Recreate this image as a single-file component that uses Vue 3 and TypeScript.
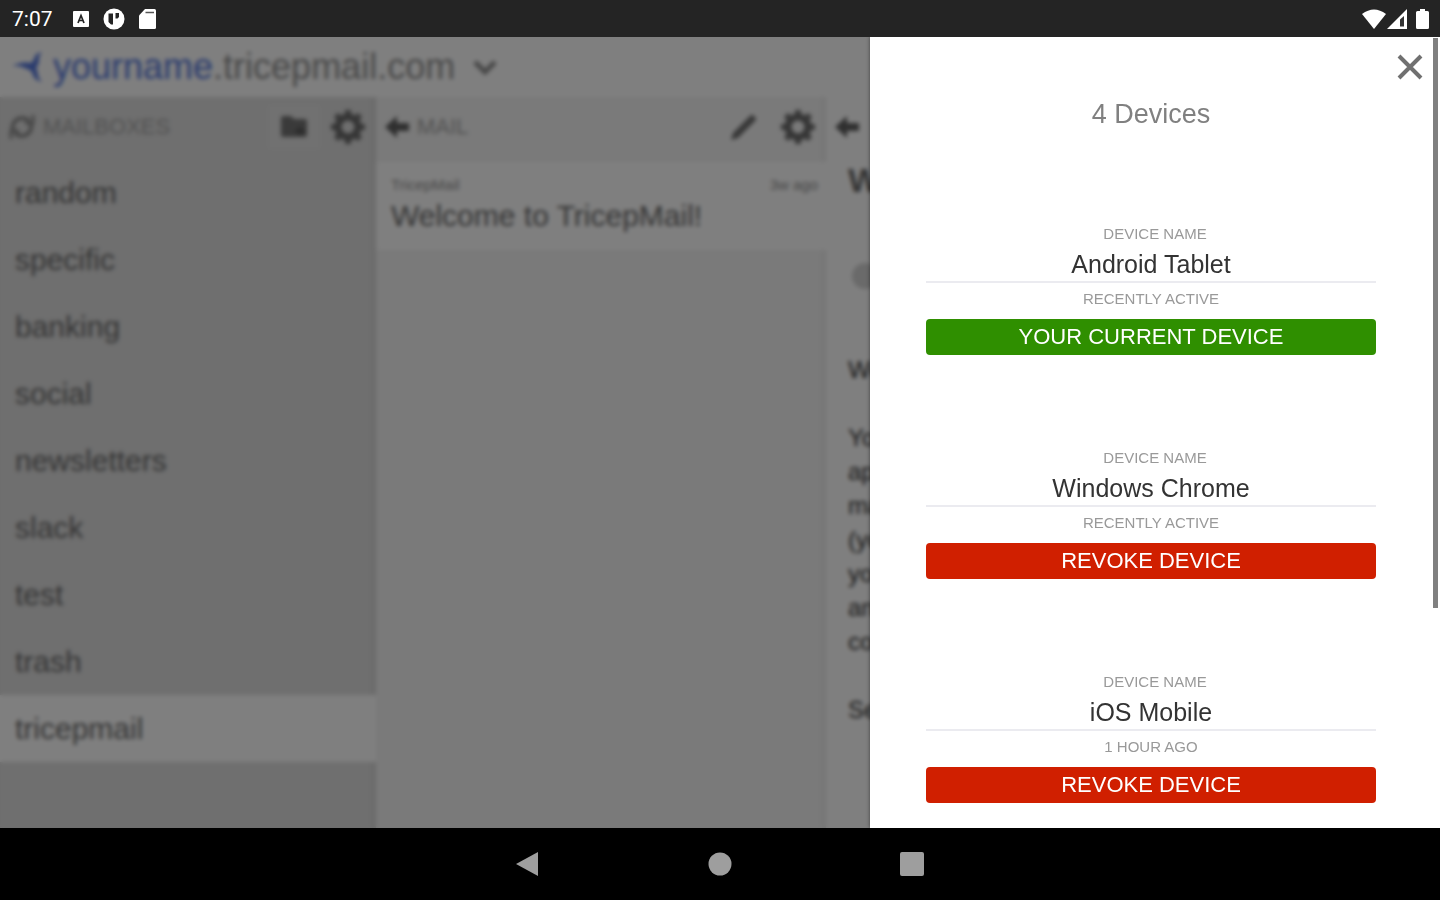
<script setup lang="ts">
import { ref } from 'vue'

interface Device {
  id: number
  name: string
  activity: string
  current: boolean
}

const mailboxes: string[] = ['random', 'specific', 'banking', 'social', 'newsletters', 'slack', 'test', 'trash', 'tricepmail']
const selected = ref('tricepmail')
const devices = ref<Device[]>([
  { id: 1, name: 'Android Tablet', activity: 'RECENTLY ACTIVE', current: true },
  { id: 2, name: 'Windows Chrome', activity: 'RECENTLY ACTIVE', current: false },
  { id: 3, name: 'iOS Mobile', activity: '1 HOUR AGO', current: false },
])
const bodyLines: string[] = ['We', '', 'Yo', 'ap', 'ma', '(yo', 'yo', 'an', 'co', '', 'Se']
</script>

<template>
  <div class="screen">
    <header class="status">
      <span class="clock">7:07</span>
      <svg width="16" height="18" viewBox="0 0 16 18">
        <rect x="0" y="1" width="16" height="16" rx="1" fill="#fff" />
        <path d="M5 13 8 5.500l3 7.500M6 10.500h4" fill="none" stroke="#242424" stroke-width="1.700" />
      </svg>
      <svg width="22" height="22" viewBox="0 0 22 22">
        <circle cx="11" cy="11" r="10.500" fill="#fff" />
        <path d="M5.500 5.500H10v11H8L5.500 14zM12.500 5H16v4l-1.500 1.500h-2z" fill="#242424" />
      </svg>
      <svg width="17" height="20" viewBox="0 0 17 20">
        <path d="M6 0h9.500A1.500 1.500 0 0 1 17 1.500v17a1.500 1.500 0 0 1-1.500 1.500h-14A1.500 1.500 0 0 1 0 18.500V6.500z" fill="#fff" />
        <path d="M6.500 3.500H15" stroke="#555" stroke-width="1.500" />
      </svg>
      <div class="signals">
        <svg width="24" height="20" viewBox="0 0 24 20"><path d="M0 5Q12-4 24 5L12 20z" fill="#fff" /></svg>
        <svg width="20" height="20" viewBox="0 0 20 20">
          <path d="M0 20 20 0v20z" fill="#fff" />
          <path d="M13 10.500 17 7v10.500h-4z" fill="#333" />
        </svg>
        <svg class="battery" width="13" height="20" viewBox="0 0 13 20">
          <path d="M4 0h5v2h2.500A1.500 1.500 0 0 1 13 3.500v15a1.500 1.500 0 0 1-1.500 1.500h-10A1.500 1.500 0 0 1 0 18.500v-15A1.500 1.500 0 0 1 1.500 2H4z" fill="#fff" />
        </svg>
      </div>
    </header>

    <main class="stage">
      <div class="mail">
        <div class="brand">
          <svg width="30" height="30" viewBox="0 0 30 30" fill="#5577dc">
            <path d="M0 14Q10 9 19 11Q22 9 23 4Q25 1 30 0Q26 4 27 10Q25 15 24 16Q26 20 26 24Q27 27 30 30Q22 28 21 23Q20 18 15 17Q8 13 0 14z" />
          </svg>
          <h1><span>yourname</span>.tricepmail.com</h1>
          <button class="plain" aria-label="Switch account">
            <svg width="26" height="18" viewBox="0 0 26 18"><path d="m3 4 10 10L23 4" fill="none" stroke="#909090" stroke-width="5" /></svg>
          </button>
        </div>
        <div class="columns">
          <nav class="boxes">
            <div class="bar">
              <svg width="28" height="28" viewBox="0 0 28 28" fill="none" stroke="#8c8c8c" stroke-width="4">
                <path d="M5 17A9.500 9.500 0 0 1 21 8M23 11A9.500 9.500 0 0 1 7 20" />
                <path d="M25 2v8h-8M3 26v-8h8" stroke-width="3" />
              </svg>
              <span class="caption">MAILBOXES</span>
              <button class="tool tool-raised" aria-label="New folder">
                <svg width="28" height="24" viewBox="0 0 28 24">
                  <path d="M1 3q0-2 2-2h8l3 3h11q2 0 2 2v14q0 2-2 2H3q-2 0-2-2z" fill="#757575" />
                  <path d="M15 16h10M20 12v8" stroke="#555" stroke-width="3" />
                </svg>
              </button>
              <button class="tool" aria-label="Mailbox settings">
                <svg width="34" height="34" viewBox="0 0 34 34" fill="none" stroke="#6c6c6c">
                  <circle cx="17" cy="17" r="10" stroke-width="7" />
                  <circle cx="17" cy="17" r="15" stroke-width="4" pathLength="16" stroke-dasharray="1 1" stroke-dashoffset="0.500" />
                </svg>
              </button>
            </div>
            <a v-for="box in mailboxes" :key="box" href="#" class="box" :class="{ active: box === selected }" @click.prevent="selected = box">{{ box }}</a>
          </nav>
          <section class="list">
            <div class="bar">
              <button class="plain" aria-label="Back to mailboxes">
                <svg width="26" height="24" viewBox="0 0 26 24"><path d="M1 12 13 1v7h12v8H13v7z" fill="#606060" /></svg>
              </button>
              <span class="caption">MAIL</span>
              <button class="tool tool-raised" aria-label="Compose">
                <svg width="28" height="28" viewBox="0 0 28 28"><path d="m1 27 2-7L20 3q2-2 4 0l1 1q2 2 0 4L8 25z" fill="#707070" /></svg>
              </button>
              <button class="tool" aria-label="Mail settings">
                <svg width="34" height="34" viewBox="0 0 34 34" fill="none" stroke="#6c6c6c">
                  <circle cx="17" cy="17" r="10" stroke-width="7" />
                  <circle cx="17" cy="17" r="15" stroke-width="4" pathLength="16" stroke-dasharray="1 1" stroke-dashoffset="0.500" />
                </svg>
              </button>
            </div>
            <article class="message">
              <div class="meta"><span>TricepMail</span><time>3w ago</time></div>
              <h2>Welcome to TricepMail!</h2>
            </article>
          </section>
          <article class="reader">
            <div class="bar">
              <button class="plain" aria-label="Back to mail">
                <svg width="26" height="24" viewBox="0 0 26 24"><path d="M1 12 13 1v7h12v8H13v7z" fill="#606060" /></svg>
              </button>
            </div>
            <h2>W</h2>
            <div class="avatar"></div>
            <p v-for="(line, i) in bodyLines" :key="i">{{ line }}</p>
          </article>
        </div>
      </div>

      <div class="overlay">
        <aside class="drawer">
          <button class="plain close" aria-label="Close">
            <svg width="26" height="26" viewBox="0 0 26 26"><path d="m2 2 22 22M24 2 2 24" stroke="#707070" stroke-width="4" /></svg>
          </button>
          <h2>4 Devices</h2>
          <section v-for="device in devices" :key="device.id" class="device">
            <label :for="`device-${device.id}`">DEVICE NAME</label>
            <input :id="`device-${device.id}`" v-model="device.name" type="text" />
            <small>{{ device.activity }}</small>
            <button :class="device.current ? 'current' : 'revoke'">{{ device.current ? 'YOUR CURRENT DEVICE' : 'REVOKE DEVICE' }}</button>
          </section>
          <div class="thumb"></div>
        </aside>
      </div>
    </main>

    <footer class="system">
      <button class="plain" aria-label="Back"><svg width="24" height="26" viewBox="0 0 24 26"><path d="M0 13 22 1v24z" fill="#9e9e9e" /></svg></button>
      <button class="plain" aria-label="Home"><svg width="24" height="24" viewBox="0 0 24 24"><circle cx="12" cy="12" r="11.500" fill="#9e9e9e" /></svg></button>
      <button class="plain" aria-label="Recent apps"><svg width="24" height="24" viewBox="0 0 24 24"><rect width="24" height="24" rx="2" fill="#9e9e9e" /></svg></button>
    </footer>
  </div>
</template>

<style>
body {
  margin: 0;
}
</style>

<style scoped>
* {
  box-sizing: border-box;
}
.screen {
  display: flex;
  flex-direction: column;
  height: 100vh;
  overflow: hidden;
  font-family: 'Liberation Sans', Arial, sans-serif;
  background: #000;
}
svg {
  display: block;
  flex: none;
}
h1,
h2,
p {
  margin: 0;
  font-weight: 400;
}
.plain {
  padding: 0;
  border: 0;
  background: none;
}
.status {
  display: flex;
  flex: none;
  align-items: center;
  height: 37px;
  padding: 0 11px 0 12px;
  background: #242424;
  color: #fff;
}
.clock {
  margin-right: 20px;
  font: 400 21px/24px Roboto, sans-serif;
}
.status > svg {
  margin-right: 14px;
}
.signals {
  display: flex;
  gap: 1px;
  margin-left: auto;
}
.battery {
  margin-left: 8px;
}
.stage {
  position: relative;
  flex: 1;
  min-height: 0;
  overflow: hidden;
}
.mail {
  display: flex;
  flex-direction: column;
  height: 100%;
  background: #fff;
}
.brand {
  display: flex;
  flex: none;
  align-items: center;
  height: 60px;
  padding-left: 12px;
}
.brand h1 {
  margin: 0 17px 0 11px;
  font-size: 36px;
  line-height: 40px;
  color: #909090;
}
.brand h1 span {
  color: #5577dc;
}
.columns {
  display: grid;
  flex: 1;
  grid-template-columns: 376fr 450fr 614fr;
  min-height: 0;
}
.bar {
  display: flex;
  flex: none;
  align-items: center;
  height: 62px;
  padding: 0 8px 2px;
}
.caption {
  flex: 1;
  margin-left: 7px;
  font-size: 22px;
  color: #a4a4a4;
}
.tool {
  display: grid;
  place-items: center;
  width: 54px;
  height: 46px;
  padding: 0;
  border: 0;
  border-radius: 4px;
  background: none;
}
.tool-raised {
  background: rgba(255, 255, 255, 0.12);
}
.boxes {
  display: flex;
  flex-direction: column;
  background: #dedede;
  box-shadow: inset -6px 0 6px -4px rgba(0, 0, 0, 0.06);
}
.boxes .bar {
  padding-right: 1px;
}
.box {
  height: 67px;
  padding-left: 15px;
  font-size: 30px;
  line-height: 67px;
  color: #686868;
  text-decoration: none;
}
.box.active {
  background: #fff;
}
.list {
  background: #f4f4f4;
  box-shadow: inset -6px 0 6px -4px rgba(0, 0, 0, 0.06);
}
.list .bar {
  height: 65px;
  padding-right: 1px;
  padding-bottom: 5px;
}
.message {
  height: 88px;
  padding: 13px 8px 0 15px;
  background: #fff;
}
.meta {
  display: flex;
  justify-content: space-between;
  font-size: 15px;
  line-height: 20px;
  color: #909090;
}
.message h2 {
  padding-top: 3px;
  font-size: 30px;
  line-height: 36px;
  color: #686868;
}
.reader {
  padding-left: 22px;
  background: #fff;
}
.reader .bar {
  margin-left: -22px;
}
.reader h2 {
  font-size: 34px;
  font-weight: 700;
  line-height: 42px;
  color: #686868;
}
.avatar {
  width: 26px;
  height: 26px;
  margin: 62px 0 64px 4px;
  border-radius: 50%;
  background: #d4d4d4;
}
.reader p {
  height: 34px;
  font-size: 24px;
  line-height: 34px;
  color: #303030;
}
.overlay {
  position: absolute;
  inset: 0;
  display: flex;
  justify-content: flex-end;
  background: rgba(0, 0, 0, 0.5);
  backdrop-filter: blur(2px);
}
.drawer {
  position: relative;
  width: 570px;
  max-width: 100%;
  padding: 57px 64px 0 56px;
  overflow: hidden;
  background: #fff;
  box-shadow: 0 0 4px rgba(0, 0, 0, 0.5);
}
.close {
  position: absolute;
  top: 17px;
  right: 17px;
}
.drawer h2 {
  margin-bottom: 90px;
  font-size: 27px;
  line-height: 40px;
  text-align: center;
  color: #808080;
}
.device {
  display: flex;
  flex-direction: column;
  margin-bottom: 93px;
  text-align: center;
}
.device label,
.device small {
  font-size: 15px;
  line-height: 20px;
  color: #999;
}
.device label {
  padding-left: 8px;
}
.device input {
  width: 100%;
  height: 39px;
  padding: 4px 0 0;
  border: 0;
  border-bottom: 2px solid #ebebf0;
  outline: 0;
  background: none;
  font: 25px/33px 'Liberation Sans', Arial, sans-serif;
  text-align: center;
  color: #333;
}
.device small {
  margin: 6px 0 10px;
}
.device button {
  height: 36px;
  padding: 0;
  border: 0;
  border-radius: 4px;
  font: 22px/36px 'Liberation Sans', Arial, sans-serif;
  color: #fff;
}
.current {
  background: #2f8f00;
}
.revoke {
  background: #d01f00;
}
.thumb {
  position: absolute;
  top: 1px;
  right: 2px;
  width: 5px;
  height: 72%;
  background: #808080;
}
.system {
  display: flex;
  flex: none;
  align-items: center;
  justify-content: center;
  gap: 168px;
  height: 72px;
}
</style>
